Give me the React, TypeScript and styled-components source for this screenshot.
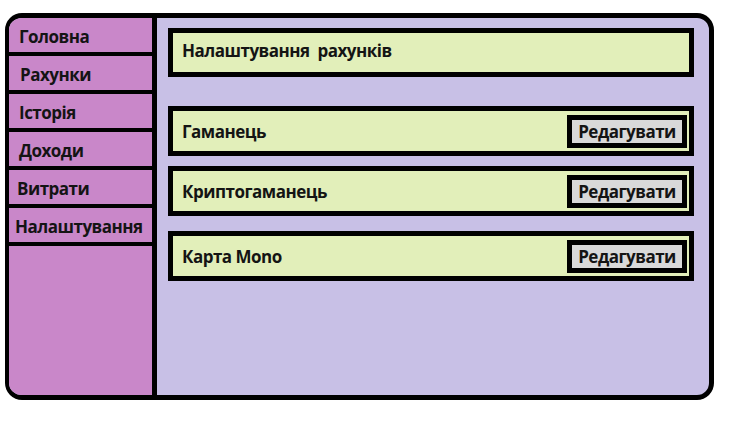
import { createGlobalStyle, styled } from 'styled-components'

const GlobalStyle = createGlobalStyle`
	html, body {
		margin: 0;
		padding: 0;
		background: #ffffff;
	}
	body {
		font-family: 'Open Sans', Lato, 'Liberation Sans', sans-serif;
		color: #141414;
	}
	* {
		box-sizing: border-box;
	}
`

const menuItems = [
	{ label: 'Головна', indent: 10 },
	{ label: 'Рахунки', indent: 11 },
	{ label: 'Історія', indent: 10 },
	{ label: 'Доходи', indent: 10 },
	{ label: 'Витрати', indent: 8 },
	{ label: 'Налаштування', indent: 6 },
]

const accounts = [
	{ name: 'Гаманець', offset: 29 },
	{ name: 'Криптогаманець', offset: 10 },
	{ name: 'Карта Mono', offset: 15 },
]

export default function App() {
	return (
		<>
			<GlobalStyle />
			<Frame>
				<Sidebar>
					{menuItems.map(({ label, indent }) => (
						<MenuItem key={label} $indent={indent}>
							{label}
						</MenuItem>
					))}
				</Sidebar>
				<Main>
					<Header>Налаштування&nbsp; рахунків</Header>
					{accounts.map(({ name, offset }) => (
						<AccountRow key={name} $offset={offset}>
							<AccountName>{name}</AccountName>
							<EditButton type="button">Редагувати</EditButton>
						</AccountRow>
					))}
				</Main>
			</Frame>
		</>
	)
}

const Frame = styled.div`
	margin: 13px 0 0 5px;
	width: 709px;
	height: 387px;
	border: 5px solid #000;
	border-left-width: 4px;
	border-radius: 17px;
	overflow: hidden;
	display: grid;
	grid-template-columns: 148px 1fr;
	background: #c8c0e6;
`

const Sidebar = styled.nav`
	display: flex;
	flex-direction: column;
	background: #c987c9;
	border-right: 5px solid #000;
`

const MenuItem = styled.div<{ $indent: number }>`
	height: 38px;
	display: flex;
	align-items: center;
	padding: 2px 0 0 ${({ $indent }) => $indent}px;
	border-bottom: 4px solid #000;
	font-size: 17px;
	font-weight: 700;
	letter-spacing: -0.5px;
	white-space: nowrap;
`

const Main = styled.main`
	display: flex;
	flex-direction: column;
	padding: 10px 15px 0 11px;
`

const Box = styled.div`
	height: 50px;
	border: 5px solid #000;
	background: #e2efba;
	display: flex;
	align-items: center;
	padding: 0 2px 0 9px;
	font-size: 17px;
	font-weight: 700;
	letter-spacing: -0.5px;
`

const Header = styled(Box)`
	height: 49px;
	padding-bottom: 4px;
`

const AccountRow = styled(Box)<{ $offset: number }>`
	margin-top: ${({ $offset }) => $offset}px;
	justify-content: space-between;
`

const AccountName = styled.span`
	white-space: nowrap;
`

const EditButton = styled.button`
	height: 33px;
	width: 120px;
	border: 5px solid #000;
	background: #d9d9d9;
	font-family: inherit;
	font-size: 17px;
	font-weight: 700;
	letter-spacing: -0.5px;
	color: #141414;
	padding: 0;
	text-align: center;
	cursor: pointer;
`
